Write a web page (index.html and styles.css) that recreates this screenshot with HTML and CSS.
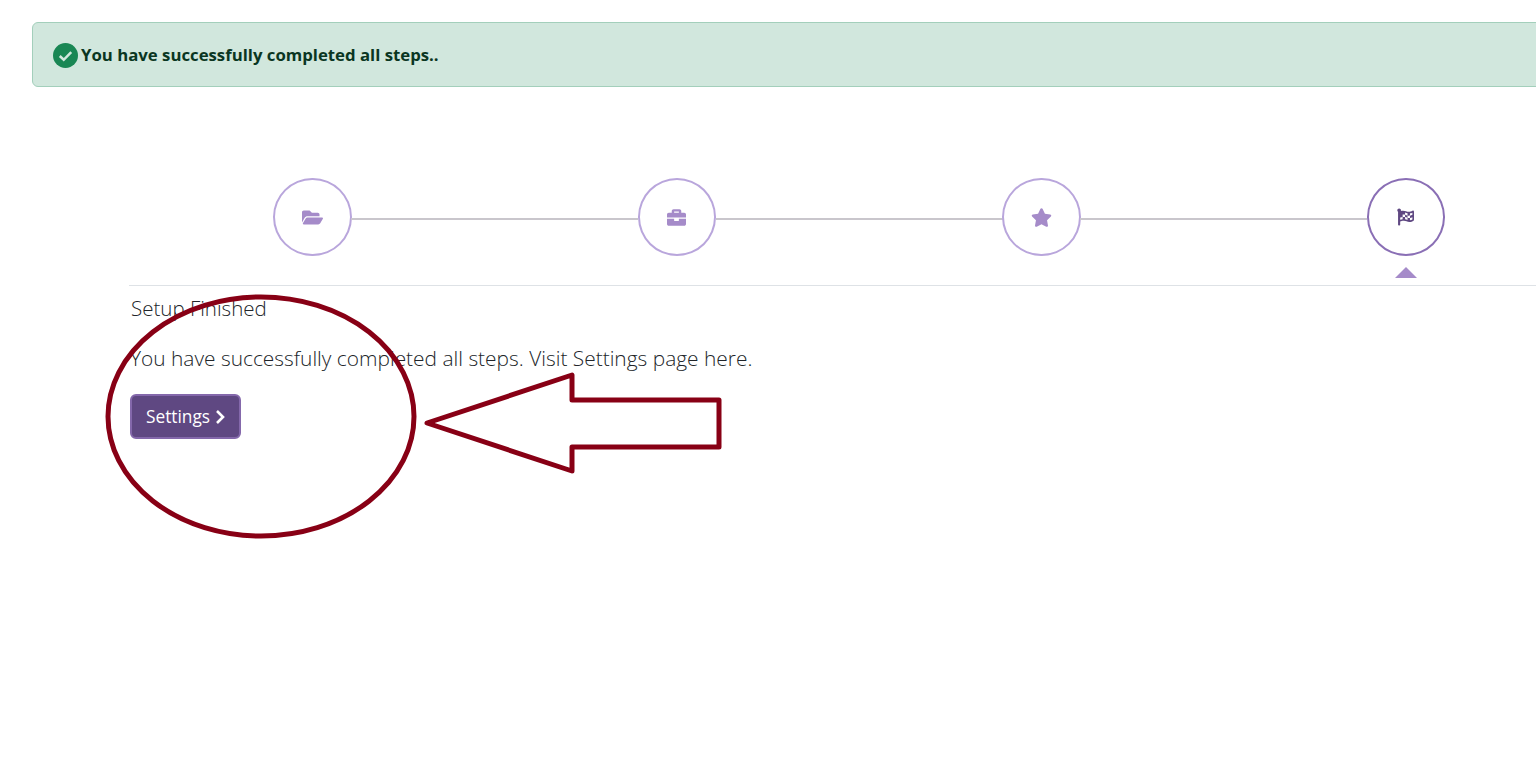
FILE: index.html
```html
<!DOCTYPE html>
<html lang="en">
<head>
    <meta charset="UTF-8">
    <meta name="viewport" content="width=device-width, initial-scale=1.0">
    <title>Setup Finished</title>
    <link rel="stylesheet" href="styles.css">
</head>
<body>

<div class="page">
    <div class="alert">
        <svg class="alert-icon" viewBox="0 0 24 24"><circle cx="12" cy="12" r="12"/><path d="M6.5 12.5l3.8 3.6 7.2-7.4"/></svg>
        <span>You have successfully completed all steps..</span>
    </div>

    <div class="wizard">
        <div class="steps">
            <div class="step">
                <div class="step-circle">
                    <svg class="step-icon" viewBox="0 0 576 512"><path d="M572.694 292.093L500.27 416.248A63.997 63.997 0 0 1 444.989 448H45.025c-18.523 0-30.064-20.093-20.731-36.093l72.424-124.155A64 64 0 0 1 152 256h399.964c18.523 0 30.064 20.093 20.73 36.093zM152 224h328v-48c0-26.51-21.49-48-48-48H272l-64-64H48C21.49 64 0 85.49 0 112v278.046l69.077-118.418C86.214 242.25 117.989 224 152 224z"/></svg>
                </div>
            </div>
            <div class="step">
                <div class="step-circle">
                    <svg class="step-icon" viewBox="0 0 512 512"><path d="M320 336c0 8.84-7.16 16-16 16h-96c-8.84 0-16-7.16-16-16v-48H0v144c0 25.6 22.4 48 48 48h416c25.6 0 48-22.4 48-48V288H320v48zm144-208h-80V80c0-25.6-22.4-48-48-48H176c-25.6 0-48 22.4-48 48v48H48c-25.6 0-48 22.4-48 48v80h512v-80c0-25.6-22.4-48-48-48zm-144 0H192V96h128v32z"/></svg>
                </div>
            </div>
            <div class="step">
                <div class="step-circle">
                    <svg class="step-icon" viewBox="0 0 576 512"><path d="M259.3 17.8L194 150.2 47.9 171.5c-26.2 3.8-36.7 36.1-17.7 54.6l105.7 103-25 145.5c-4.5 26.3 23.2 46 46.4 33.7L288 439.6l130.7 68.7c23.2 12.2 50.9-7.4 46.4-33.7l-25-145.5 105.7-103c19-18.5 8.5-50.8-17.7-54.6L382 150.2 316.7 17.8c-11.7-23.6-45.6-23.9-57.4 0z"/></svg>
                </div>
            </div>
            <div class="step step-active">
                <div class="step-circle">
                    <svg class="step-icon" viewBox="0 0 512 512"><path d="M243.2 189.9V258c26.1 5.9 49.3 15.6 73.6 22.3v-68.2c-26-5.8-49.4-15.5-73.6-22.2zm223.3-123c-34.3 15.9-76.5 31.9-117 31.9C296 98.8 251.7 64 184.3 64c-25 0-47.3 4.4-68 12 2.8-7.3 4.1-15.2 3.6-23.6C118.1 24 94.8 1.2 66.3 0 34.3-1.3 8 24.3 8 56c0 19 9.5 35.8 24 45.9V488c0 13.3 10.7 24 24 24h16c13.3 0 24-10.7 24-24v-94.4c28.3-12.1 63.6-22.1 114.4-22.1 53.6 0 97.8 34.8 165.2 34.8 48.2 0 86.7-16.3 122.5-40.9 8.7-6 13.8-15.8 13.8-26.4V95.9c.1-23.3-24.2-38.8-45.4-29zM169.6 325.5c-25.8 2.7-50 8.7-73.6 16.6v-70.5c26.2-9.3 47.5-15 73.6-17.4zM464 191c-23.6 9.8-46.3 19.5-73.6 23.9V286c24.8-3.4 51.4-11.8 73.6-26v70.5c-25.1 16.1-48.5 24.7-73.6 27.1V286c-27 3.7-47.9 1.5-73.6-5.6v67.4c-25.7-7.1-49.6-17.1-73.6-22.1V258c-25.7-4.5-48.7-3.7-73.6-3.8v-70.2c25.6-1.4 49.6.4 73.6 5.7v-68.2c26.3 7.5 50.3 17.6 73.6 22.3v68.3c27.2 6.5 49.6 7.5 73.6 1.8v-68.4c26.5-1.9 50.1-10.4 73.6-19.8z"/></svg>
                </div>
                <div class="step-caret"></div>
            </div>
        </div>

        <div class="finish">
            <h2>Setup Finished</h2>
            <p>You have successfully completed all steps. Visit Settings page here.</p>
            <button class="btn-settings">
                Settings
                <svg class="chevron" viewBox="0 0 10 16"><path d="M2 2l6 6-6 6"/></svg>
            </button>
        </div>
    </div>
</div>

<!-- red markup drawn on top of the screenshot -->
<svg class="markup" viewBox="0 0 1536 758">
    <ellipse cx="261" cy="416.5" rx="153" ry="119.5"/>
    <path d="M427 423L572 375V400H719V447H572V471Z"/>
</svg>

</body>
</html>
```

FILE: styles.css
```css
html, body {
    margin: 0;
    padding: 0;
    height: 100%;
    overflow: hidden;
}
body {
    font-family: 'Open Sans', 'Noto Sans', sans-serif;
    background-color: #ffffff;
    color: #212529;
    position: relative;
}
.page {
    width: 1620px;
    padding: 22px 0 0 32px;
    box-sizing: border-box;
}
.alert {
    display: flex;
    align-items: center;
    gap: 3px;
    height: 65px;
    box-sizing: border-box;
    padding: 0 20px;
    background-color: #d1e7dd;
    border: 1px solid #a3cfbb;
    border-radius: 6px;
    color: #0a3622;
    font-size: 16.75px;
    font-weight: 700;
}
.alert-icon {
    width: 25px;
    height: 25px;
    margin-top: 2px;
    fill: #198754;
}
.alert-icon path {
    fill: none;
    stroke: #d1e7dd;
    stroke-width: 2.4;
}
.wizard {
    margin: 91px 0 0 97px;
}
.steps {
    display: grid;
    grid-template-columns: repeat(4, 364.5px);
    padding: 0 0 7px 1px;
    border-bottom: 1px solid #dee2e6;
}
.step {
    display: flex;
    flex-direction: column;
    align-items: center;
    gap: 11px;
    height: 100px;
    position: relative;
}
.step::after {
    content: "";
    position: absolute;
    top: 40px;
    left: calc(50% + 39px);
    width: 287px;
    height: 2px;
    background-color: #c9c6cc;
}
.step-active::after {
    display: none;
}
.step-circle {
    width: 78.5px;
    height: 78px;
    box-sizing: border-box;
    display: flex;
    align-items: center;
    justify-content: center;
    background-color: #ffffff;
    border: 2px solid #b9a6dc;
    border-radius: 50%;
}
.step-active .step-circle {
    border-color: #8a6fb5;
}
.step-icon {
    width: 21px;
    height: 19px;
    fill: #a58bc9;
}
.step-active .step-icon {
    width: 17px;
    height: 18px;
    fill: #5f4882;
}
.step-caret {
    width: 0;
    height: 0;
    border-left: 11px solid transparent;
    border-right: 11px solid transparent;
    border-bottom: 11px solid #a58bc9;
}
.finish {
    padding-left: 1px;
    font-weight: 300;
    color: #212529;
}
.finish h2 {
    margin: 7px 0 0 1px;
    font-size: 20.5px;
    font-weight: 300;
    line-height: 30px;
}
.finish p {
    margin: 20px 0 0;
    font-size: 20.9px;
    line-height: 30px;
}
.btn-settings {
    display: flex;
    align-items: center;
    gap: 5px;
    margin-top: 21px;
    height: 45px;
    width: 111px;
    box-sizing: border-box;
    padding: 0 10px 0 14px;
    background-color: #5f4882;
    border: 2px solid #8468ab;
    border-radius: 6px;
    color: #ffffff;
    font-family: inherit;
    font-size: 17.3px;
}
.chevron {
    flex-shrink: 0;
    width: 10px;
    height: 16px;
    fill: none;
    stroke: #ffffff;
    stroke-width: 2.6;
}
.markup {
    position: absolute;
    top: 0;
    left: 0;
    width: 1536px;
    height: 758px;
    fill: none;
    stroke: #880015;
    stroke-width: 5;
    stroke-linejoin: round;
    pointer-events: none;
}
```
